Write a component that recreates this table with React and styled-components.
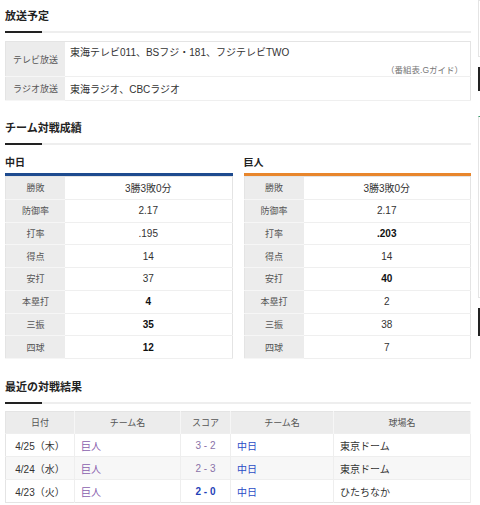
import React from "react";
import styled, { createGlobalStyle } from "styled-components";

const Global = createGlobalStyle`
  html, body { margin: 0; padding: 0; background: #fff; }
  body {
    font-family: "Liberation Sans", "Noto Sans CJK JP", sans-serif;
    color: #333;
    overflow: hidden;
  }
`;

const Page = styled.div`
  display: flex;
  width: 480px;
  height: 505px;
  overflow: hidden;
`;

const Main = styled.div`
  width: 466px;
  margin-left: 5px;
  flex-shrink: 0;
`;

const Side = styled.div`
  margin-left: 7px;
  width: 20px;
  flex-shrink: 0;
  display: flex;
  flex-direction: column;
`;

const SideBox = styled.div`
  height: ${(p) => p.h}px;
  margin-top: ${(p) => p.mt || 0}px;
  border: 1px solid #e4e4e4;
  border-top-color: ${(p) => p.accent || "#e4e4e4"};
`;

const SideDark = styled.div`
  height: ${(p) => p.h}px;
  margin-top: ${(p) => p.mt || 0}px;
  background: #222;
`;

const Section = styled.section`
  padding-top: ${(p) => p.top}px;
`;

const Heading = styled.h2`
  margin: 0;
  font-size: 11px;
  font-weight: bold;
  line-height: 16px;
  color: #222;
`;

const Rule = styled.div`
  height: 2px;
  margin-top: 7px;
  margin-bottom: ${(p) => p.mb || 8}px;
  background: linear-gradient(to right, #222 37px, #eeeeee 37px);
`;

const Table = styled.table`
  width: 100%;
  border-collapse: collapse;
  border: 1px solid #e4e4e4;
  font-size: 10px;
  table-layout: fixed;
`;

const Label = styled.th`
  width: 59px;
  background: #ececec;
  color: #555;
  font-size: 9px;
  font-weight: normal;
  text-align: center;
  border-bottom: 1px solid #f6f6f6;
  padding: 0;
`;

const Cell = styled.td`
  padding: 0 5px;
  border-bottom: 1px solid #efefef;
  vertical-align: middle;
`;

const BroadRow = styled.tr`
  height: ${(p) => p.h}px;
`;

const Note = styled.div`
  text-align: right;
  color: #777;
  font-size: 8.5px;
  margin-top: 4px;
  padding-right: 2px;
`;

const Teams = styled.div`
  display: grid;
  grid-template-columns: 1fr 1fr;
  column-gap: 11px;
`;

const TeamName = styled.div`
  font-size: 10px;
  font-weight: bold;
  line-height: 14px;
  padding-top: 3px;
  color: #222;
`;

const Bar = styled.div`
  height: 3px;
  margin-top: 3px;
  background: ${(p) => p.color};
`;

const StatRow = styled.tr`
  height: 22.75px;
`;

const StatValue = styled.td`
  text-align: center;
  font-weight: ${(p) => (p.bold ? "bold" : "normal")};
  color: ${(p) => (p.bold ? "#111" : "#333")};
  border-bottom: 1px solid #efefef;
  padding: 0;
`;

const HeadCell = styled.th`
  background: #ececec;
  color: #555;
  font-size: 9px;
  font-weight: normal;
  height: 21px;
  padding: 0;
  border-right: 1px solid #f6f6f6;
  width: ${(p) => p.w}px;
`;

const ResultRow = styled.tr`
  height: 23px;
  background: ${(p) => (p.alt ? "#f7f7f7" : "#fff")};
`;

const RCell = styled.td`
  padding: 0 6px;
  text-align: ${(p) => p.align || "left"};
  color: ${(p) => p.color || "#333"};
  font-weight: ${(p) => (p.bold ? "bold" : "normal")};
  border-right: 1px solid #eeeeee;
  border-top: 1px solid #eeeeee;
`;

const GIANTS = "#8a5fae";
const DRAGONS = "#2a4cc6";

const dragons = [
  ["勝敗", "3勝3敗0分"],
  ["防御率", "2.17"],
  ["打率", ".195"],
  ["得点", "14"],
  ["安打", "37"],
  ["本塁打", "4", true],
  ["三振", "35", true],
  ["四球", "12", true],
];

const giants = [
  ["勝敗", "3勝3敗0分"],
  ["防御率", "2.17"],
  ["打率", ".203", true],
  ["得点", "14"],
  ["安打", "40", true],
  ["本塁打", "2"],
  ["三振", "38"],
  ["四球", "7"],
];

const results = [
  { date: "4/25（木）", score: "3 - 2", park: "東京ドーム", win: false },
  { date: "4/24（水）", score: "2 - 3", park: "東京ドーム", win: false },
  { date: "4/23（火）", score: "2 - 0", park: "ひたちなか", win: true },
];

function StatTable({ name, color, rows }) {
  return (
    <div>
      <TeamName>{name}</TeamName>
      <Bar color={color} />
      <Table>
        <tbody>
          {rows.map(([k, v, b]) => (
            <StatRow key={k}>
              <Label>{k}</Label>
              <StatValue bold={b}>{v}</StatValue>
            </StatRow>
          ))}
        </tbody>
      </Table>
    </div>
  );
}

export default function App() {
  return (
    <Page>
      <Global />
      <Main>
        <Section top={8}>
          <Heading>放送予定</Heading>
          <Rule />
          <Table>
            <tbody>
              <BroadRow h={35}>
                <Label>テレビ放送</Label>
                <Cell>
                  東海テレビ011、BSフジ・181、フジテレビTWO
                  <Note>（番組表.Gガイド）</Note>
                </Cell>
              </BroadRow>
              <BroadRow h={24}>
                <Label>ラジオ放送</Label>
                <Cell>東海ラジオ、CBCラジオ</Cell>
              </BroadRow>
            </tbody>
          </Table>
        </Section>

        <Section top={19}>
          <Heading>チーム対戦成績</Heading>
          <Rule />
          <Teams>
            <StatTable name="中日" color="#1e4b8f" rows={dragons} />
            <StatTable name="巨人" color="#e8862c" rows={giants} />
          </Teams>
        </Section>

        <Section top={20}>
          <Heading>最近の対戦結果</Heading>
          <Rule mb={7} />
          <Table>
            <thead>
              <tr>
                <HeadCell w={68}>日付</HeadCell>
                <HeadCell w={105}>チーム名</HeadCell>
                <HeadCell w={49}>スコア</HeadCell>
                <HeadCell w={102}>チーム名</HeadCell>
                <HeadCell>球場名</HeadCell>
              </tr>
            </thead>
            <tbody>
              {results.map((r, i) => (
                <ResultRow key={r.date} alt={i === 1}>
                  <RCell align="center">{r.date}</RCell>
                  <RCell color={GIANTS}>巨人</RCell>
                  <RCell
                    align="center"
                    color={r.win ? "#1f3fb8" : "#8a72a8"}
                    bold={r.win}
                  >
                    {r.score}
                  </RCell>
                  <RCell color={DRAGONS}>中日</RCell>
                  <RCell>{r.park}</RCell>
                </ResultRow>
              ))}
            </tbody>
          </Table>
        </Section>
      </Main>
      <Side>
        <SideBox h={55} />
        <SideDark h={24} mt={10} />
        <SideBox h={180} mt={25} accent="#3a9a6a" />
        <SideDark h={28} mt={10} />
      </Side>
    </Page>
  );
}
